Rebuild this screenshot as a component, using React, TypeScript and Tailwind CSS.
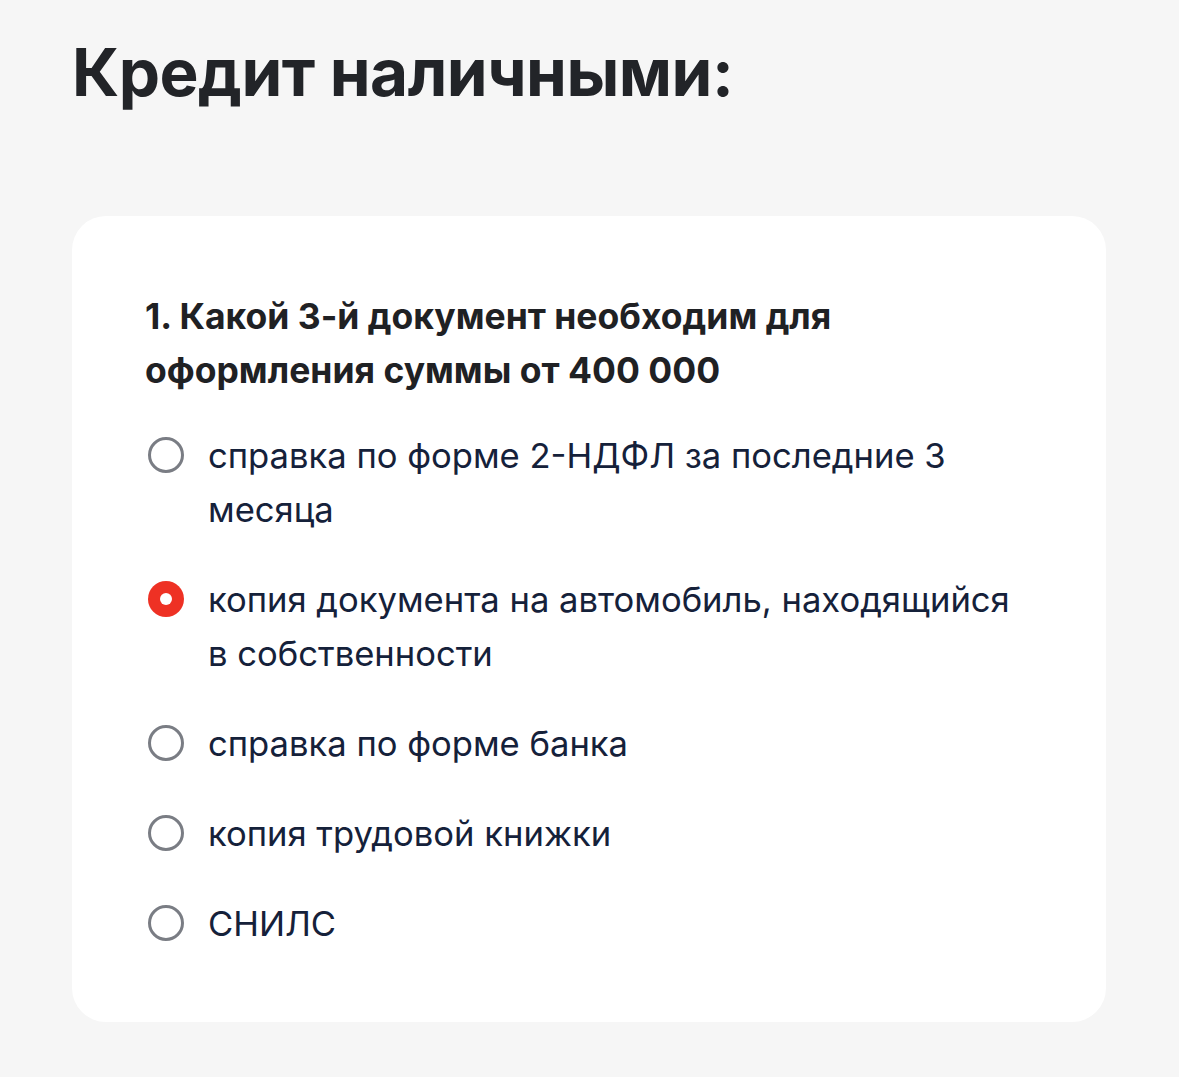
import React from "react";

const options = [
  { text: "справка по форме 2-НДФЛ за последние 3 месяца", selected: false },
  { text: "копия документа на автомобиль, находящийся в собственности", selected: true },
  { text: "справка по форме банка", selected: false },
  { text: "копия трудовой книжки", selected: false },
  { text: "СНИЛС", selected: false },
];

function Radio({ selected }: { selected: boolean }) {
  if (selected) {
    return (
      <span className="mt-[9px] flex h-[36px] w-[36px] shrink-0 items-center justify-center rounded-full bg-[#ee3124]">
        <span className="h-[12px] w-[12px] rounded-full bg-white" />
      </span>
    );
  }
  return <span className="mt-[9px] h-[36px] w-[36px] shrink-0 rounded-full border-[3px] border-[#7a7d84]" />;
}

export default function App() {
  return (
    <div className="min-h-[1077px] bg-[#f6f6f6] px-[72px] pt-[30px] pb-[56px] font-['Inter','Noto_Sans',sans-serif]">
      <h1 className="text-[65.6px] font-bold leading-[84px] tracking-[-0.5px] text-[#222428]">
        Кредит наличными:
      </h1>
      <div className="mt-[102px] w-[1034px] rounded-[34px] bg-white pl-[73px] pr-[86px] pt-[74px] pb-[72px]">
        <p className="text-[35.5px] font-bold leading-[54px] text-[#1f2124]">
          1. Какой 3-й документ необходим для
          <br />
          оформления суммы от 400 000
        </p>
        <div className="mt-[30px] flex flex-col gap-[36px]">
          {options.map((o) => (
            <div key={o.text} className="flex items-start gap-[24px] pl-[3px]">
              <Radio selected={o.selected} />
              <span className="text-[34.6px] leading-[54px] text-[#15213a]">{o.text}</span>
            </div>
          ))}
        </div>
      </div>
    </div>
  );
}
